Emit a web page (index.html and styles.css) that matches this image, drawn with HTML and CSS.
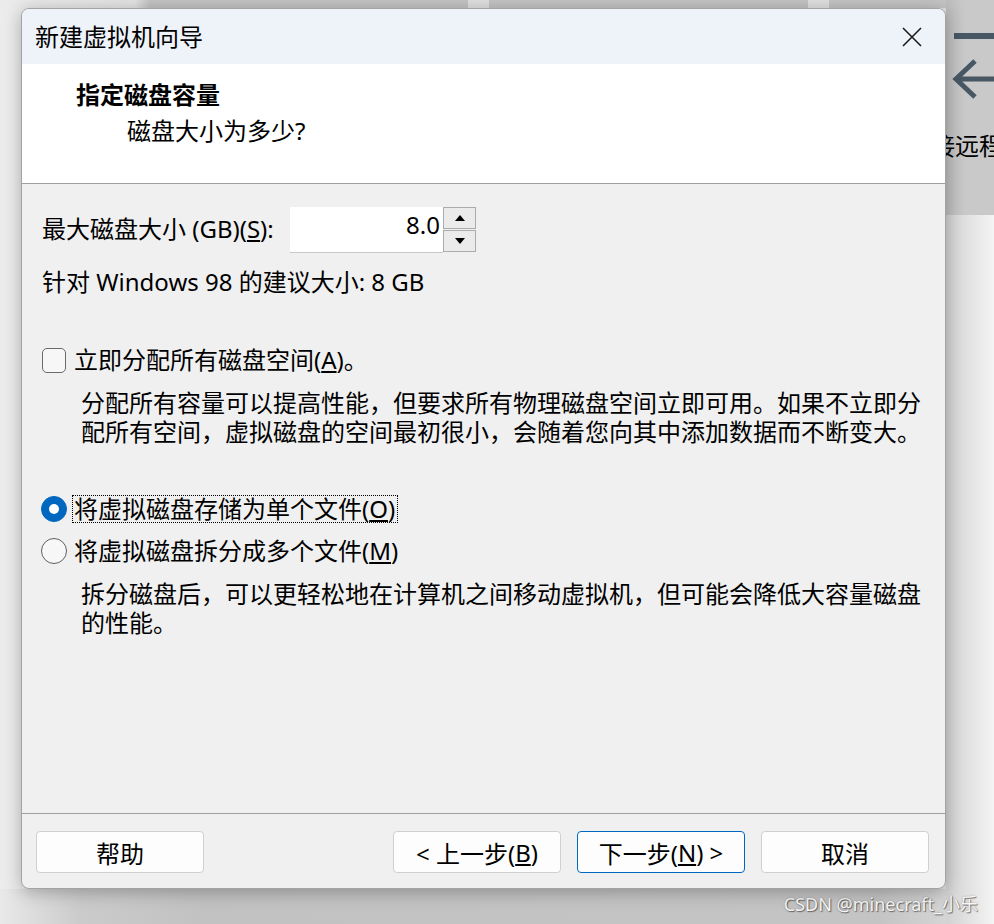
FILE: index.html
```html
<!DOCTYPE html>
<html lang="zh-CN">
<head>
<meta charset="utf-8">
<title>新建虚拟机向导</title>
<link rel="stylesheet" href="styles.css">
</head>
<body>
<div class="page">
  <div class="dialog">
    <div class="titlebar">
      <span class="title">新建虚拟机向导</span>
      <span class="close"><svg width="20" height="20" viewBox="0 0 20 20"><path d="M1 1 L19 19 M19 1 L1 19" stroke="#1c1c1c" stroke-width="1.6" fill="none"/></svg></span>
    </div>
    <div class="header">
      <div class="h-title">指定磁盘容量</div>
      <div class="h-sub">磁盘大小为多少?</div>
    </div>
    <div class="body">
      <div class="size-row">
        <span class="size-label">最大磁盘大小 (GB)(<u>S</u>):</span>
        <div class="spin">
          <div class="spin-input">8.0</div>
          <div class="spin-btns">
            <div class="spin-btn"><svg width="10" height="6" viewBox="0 0 10 6"><polygon points="0,6 5,0 10,6" fill="#000"/></svg></div>
            <div class="spin-btn"><svg width="10" height="6" viewBox="0 0 10 6"><polygon points="0,0 10,0 5,6" fill="#000"/></svg></div>
          </div>
        </div>
      </div>
      <div class="hint">针对 Windows 98 的建议大小: 8 GB</div>
      <div class="opt opt-check">
        <span class="checkbox"></span>
        <span class="opt-label">立即分配所有磁盘空间(<u>A</u>)。</span>
      </div>
      <div class="desc">
        <div class="desc-line">分配所有容量可以提高性能，但要求所有物理磁盘空间立即可用。如果不立即分</div>
        <div class="desc-line">配所有空间，虚拟磁盘的空间最初很小，会随着您向其中添加数据而不断变大。</div>
      </div>
      <div class="opt opt-radio1">
        <span class="radio on"></span>
        <span class="opt-label focus">将虚拟磁盘存储为单个文件(<u>O</u>)</span>
      </div>
      <div class="opt opt-radio2">
        <span class="radio"></span>
        <span class="opt-label">将虚拟磁盘拆分成多个文件(<u>M</u>)</span>
      </div>
      <div class="desc">
        <div class="desc-line">拆分磁盘后，可以更轻松地在计算机之间移动虚拟机，但可能会降低大容量磁盘</div>
        <div class="desc-line">的性能。</div>
      </div>
    </div>
    <div class="footer">
      <div class="btn btn-help">帮助</div>
      <div class="btn">&lt; 上一步(<u>B</u>)</div>
      <div class="btn btn-primary">下一步(<u>N</u>) &gt;</div>
      <div class="btn">取消</div>
    </div>
  </div>
  <div class="side">
    <div class="side-top">
      <div class="side-dash"></div>
      <svg class="side-arrow" width="42" height="40" viewBox="0 0 42 40"><path d="M23 2 L4 20 L23 38 M4 20 H42" stroke="#475763" stroke-width="5" fill="none"/></svg>
      <div class="side-text">接远程</div>
    </div>
    <div class="side-bottom"></div>
  </div>
  <div class="watermark">CSDN @minecraft_小乐</div>
</div>
</body>
</html>
```
FILE: styles.css
```css
html, body {
  margin: 0;
  padding: 0;
}

body {
  font-family: "Noto Sans", "Noto Sans CJK SC", sans-serif;
  color: #000;
}

.page {
  position: relative;
  width: 994px;
  height: 924px;
  box-sizing: border-box;
  padding-left: 21px;
  display: flex;
  align-items: flex-start;
  overflow: hidden;
  background:
    linear-gradient(to right, #ebebeb 0, #e4e4e4 135px, #c4c4c4 150px, #c4c4c4 468px, #e0e0e0 468px, #e0e0e0 489px, #c4c4c4 489px, #c4c4c4 808px, #e0e0e0 808px, #e0e0e0 829px, #c4c4c4 829px) 0 0 / 100% 8px no-repeat,
    linear-gradient(to right, #e9e9e9 0, #cbcbcb 80px, #c2c2c2 200px, #c4c4c4 880px, #d8d8d8 960px, #eeeeee 994px) 0 889px / 100% 35px no-repeat,
    linear-gradient(to right, #ececec, #e0e0e0);
}

.dialog {
  position: relative;
  z-index: 1;
  flex: none;
  margin-top: 8px;
  width: 925px;
  height: 881px;
  box-sizing: border-box;
  border: 1px solid #a3a3a3;
  border-radius: 8px;
  background: #f0f0f0;
  display: flex;
  flex-direction: column;
  overflow: hidden;
  box-shadow: 0 3px 18px rgba(0, 0, 0, 0.28);
}

.titlebar {
  flex: none;
  height: 55px;
  background: #eef2f9;
  display: flex;
  align-items: center;
  justify-content: space-between;
  padding: 0 23px 0 13px;
}

.title {
  font-size: 24px;
  line-height: 30px;
}

.close {
  display: flex;
  width: 20px;
  height: 20px;
}

.header {
  flex: none;
  height: 120px;
  box-sizing: border-box;
  background: #fff;
  border-bottom: 1px solid #a0a0a0;
  padding: 16px 0 0 54px;
}

.h-title {
  font-size: 24px;
  line-height: 30px;
  font-weight: 700;
}

.h-sub {
  margin: 6px 0 0 51px;
  font-size: 24px;
  line-height: 30px;
}

.body {
  flex: none;
  height: 630px;
  box-sizing: border-box;
  border-bottom: 1px solid #a0a0a0;
  padding: 23px 10px 0 20px;
  font-size: 24px;
}

.size-row {
  display: flex;
  align-items: flex-start;
  height: 46px;
}

.size-label {
  width: 248px;
  line-height: 44px;
}

.spin {
  display: flex;
}

.spin-input {
  width: 153px;
  height: 46px;
  box-sizing: border-box;
  background: #fff;
  border-bottom: 1px solid #c8c8c8;
  text-align: right;
  padding-right: 3px;
  line-height: 36px;
}

.spin-btns {
  width: 33px;
  display: flex;
  flex-direction: column;
  gap: 1px;
}

.spin-btn {
  height: 22px;
  box-sizing: border-box;
  border: 1px solid #ababab;
  background: #ebebeb;
  display: flex;
  align-items: center;
  justify-content: center;
}

.hint {
  margin-top: 15px;
  line-height: 28px;
}

.opt {
  display: flex;
  align-items: center;
  height: 28px;
}

.opt-check {
  margin-top: 50px;
}

.opt-radio1 {
  margin-top: 49px;
}

.opt-radio2 {
  margin-top: 14px;
}

.checkbox {
  width: 24px;
  height: 25px;
  box-sizing: border-box;
  border: 1.5px solid #6a6a6a;
  border-radius: 5px;
  background: #f7f7f7;
  margin-right: 8px;
}

.radio {
  width: 26px;
  height: 26px;
  box-sizing: border-box;
  border: 1.5px solid #5f5f5f;
  border-radius: 50%;
  background: #f7f7f7;
  margin-left: -1px;
  margin-right: 7px;
}

.radio.on {
  background: #0067c0;
  border-color: #0067c0;
  display: flex;
  align-items: center;
  justify-content: center;
  margin-right: 5px;
}

.radio.on::after {
  content: "";
  width: 10px;
  height: 10px;
  border-radius: 50%;
  background: #fff;
}

.opt-label {
  line-height: 28px;
  white-space: nowrap;
}

.opt-label.focus {
  height: 28px;
  box-sizing: border-box;
  line-height: 26px;
  border: 1px dotted #000;
  padding: 0 2px 0 1px;
}

.desc {
  margin: 14px 0 0 39px;
}

.desc-line {
  height: 29px;
  line-height: 29px;
  white-space: nowrap;
}

.footer {
  flex: 1;
  display: flex;
  gap: 16px;
  padding: 17px 16px 0 14px;
}

.btn {
  width: 168px;
  height: 42px;
  box-sizing: border-box;
  border: 1px solid #d0d0d0;
  border-radius: 4px;
  background: #fdfdfd;
  font-size: 24px;
  display: flex;
  align-items: center;
  justify-content: center;
  white-space: nowrap;
}

.btn-help {
  margin-right: auto;
}

.btn-primary {
  border-color: #0067c0;
}

.side {
  flex: 1;
  height: 924px;
  display: flex;
  flex-direction: column;
  overflow: hidden;
}

.side-top {
  height: 215px;
  background: linear-gradient(to right, #bdbdbd, #c9c9c9 20px);
  display: flex;
  flex-direction: column;
}

.side-dash {
  margin: 33px 0 0 8px;
  height: 6px;
  background: #475763;
}

.side-arrow {
  margin: 20px 0 0 6px;
}

.side-text {
  margin: 32px 0 0 -15px;
  font-size: 24px;
  line-height: 30px;
  white-space: nowrap;
}

.side-bottom {
  flex: 1;
  background: linear-gradient(to right, #d2d2d2, #f4f4f4);
}

.watermark {
  position: absolute;
  right: 16px;
  top: 892px;
  font-size: 18px;
  line-height: 24px;
  color: #f6f6f6;
  text-shadow: 1px 1px 1px rgba(0, 0, 0, 0.45), 0 0 2px rgba(0, 0, 0, 0.3);
  white-space: nowrap;
}
```
